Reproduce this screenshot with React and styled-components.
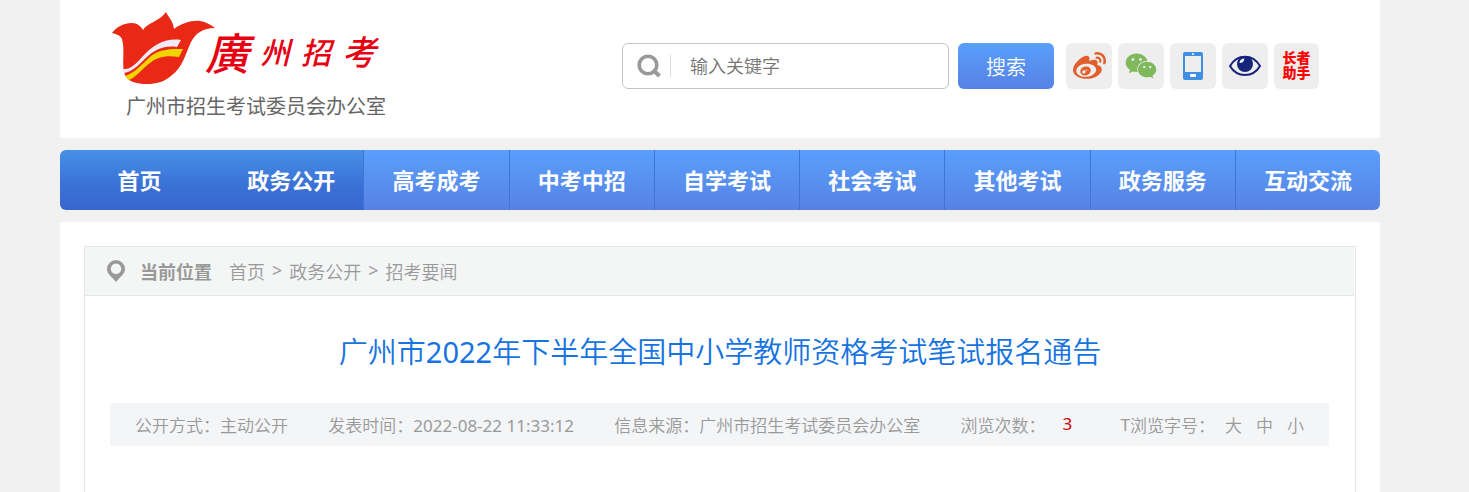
import { FaWeibo, FaWeixin } from 'react-icons/fa';
import styled, { createGlobalStyle } from 'styled-components';

const navItems = [
  '首页',
  '政务公开',
  '高考成考',
  '中考中招',
  '自学考试',
  '社会考试',
  '其他考试',
  '政务服务',
  '互动交流',
];

function Logo() {
  return (
    <LogoLink href="#">
      <LogoTop>
        <Flower viewBox="0 0 103 72" aria-hidden="true">
          <path
            fill="#e92815"
            d="M0 21C6 13 17 9 25 12C28 14 30 16 31 18C35 11 48 9 54 0C56 5 61 8 62 17C70 11 80 8 88 9C94 10 99 13 103 16C91 16 84 21 79 30C73 43 71 55 59 64C52 70 44 72 35 72C25 72 14 70 12 60C10 49 13 38 10 27C8 23 4 22 0 21Z"
          />
          <path
            fill="#f1e9f5"
            d="M11 57C20 58 26 49 33 42C43 32 54 26 69 28L65 35C52 33 43 38 36 44C27 52 21 60 12 61Z"
          />
          <path
            fill="#f1d400"
            d="M13 64C23 61 31 51 39 44C48 37 58 37 71 37L67 45C54 43 45 45 38 51C30 57 24 65 17 68Z"
          />
        </Flower>
        <Brush>
          <BrushChar $size={44}>廣</BrushChar>
          <BrushChar $size={30}>州</BrushChar>
          <BrushChar $size={30}>招</BrushChar>
          <BrushChar $size={34}>考</BrushChar>
        </Brush>
      </LogoTop>
      <Office>广州市招生考试委员会办公室</Office>
    </LogoLink>
  );
}

function Tools() {
  return (
    <ToolsForm role="search" onSubmit={(e) => e.preventDefault()}>
      <SearchBox>
        <svg width="24" height="24" viewBox="0 0 24 24" fill="none" stroke="#999">
          <circle cx="11" cy="11" r="8.8" strokeWidth="3.6" />
          <path d="M16 16L22.5 22" strokeWidth="4" />
        </svg>
        <SearchInput placeholder="输入关键字" aria-label="输入关键字" />
      </SearchBox>
      <SearchButton type="submit">搜索</SearchButton>
      <Shortcuts>
        <Shortcut href="#" aria-label="微博">
          <FaWeibo size={33} color="#e15f2d" />
        </Shortcut>
        <Shortcut href="#" aria-label="微信">
          <FaWeixin size={32} color="#7fb95b" />
        </Shortcut>
        <Shortcut href="#" aria-label="手机版">
          <svg width="20" height="28" viewBox="0 0 20 28">
            <rect width="20" height="28" rx="2" fill="#3f8fe2" />
            <rect x="2" y="4" width="16" height="16" fill="#eee" />
            <rect x="7" y="22" width="6" height="3" rx="1" fill="#fff" />
            <circle cx="10" cy="2" r="1" fill="#fff" />
          </svg>
        </Shortcut>
        <Shortcut href="#" aria-label="无障碍">
          <svg width="32" height="22" viewBox="0 0 32 22">
            <path
              d="M1 11C8 -1.5 24 -1.5 31 11C24 23 8 23 1 11Z"
              fill="#eee"
              stroke="#16247c"
              strokeWidth="2"
            />
            <circle cx="16" cy="9" r="8" fill="#16247c" />
            <path d="M10.5 8C10.5 5 12.5 3.5 15.5 3.5C15 6.5 13.5 8 10.5 8Z" fill="#eee" />
          </svg>
        </Shortcut>
        <Shortcut href="#">
          <Elder>长者助手</Elder>
        </Shortcut>
      </Shortcuts>
    </ToolsForm>
  );
}

function App() {
  return (
    <Page lang="zh-CN">
      <GlobalStyle />
      <Header>
        <Logo />
        <Tools />
      </Header>

      <Nav>
        {navItems.map((item, i) => (
          <NavLink key={item} href="#" $first={i === 0} $active={i < 2}>
            {item}
          </NavLink>
        ))}
      </Nav>

      <Main>
        <Panel>
          <Location>
            <svg width="18" height="22" viewBox="0 0 18 22">
              <path
                fill="#999"
                fillRule="evenodd"
                d="M9 0A9 9 0 0 1 18 9C18 14 13 17 9 22C5 17 0 14 0 9A9 9 0 0 1 9 0ZM9 3.5A5.2 5.2 0 1 0 9 14A5.2 5.2 0 1 0 9 3.5Z"
              />
            </svg>
            <strong>当前位置</strong>
            <Crumbs>
              <a href="#">首页</a>
              <Latin>&gt;</Latin>
              <a href="#">政务公开</a>
              <Latin>&gt;</Latin>
              <a href="#">招考要闻</a>
            </Crumbs>
          </Location>

          <Title>
            广州市<Latin>2022</Latin>年下半年全国中小学教师资格考试笔试报名通告
          </Title>

          <Meta>
            <span>公开方式：主动公开</span>
            <span>
              发表时间：<Latin>2022-08-22 11:33:12</Latin>
            </span>
            <span>信息来源：广州市招生考试委员会办公室</span>
            <Views>
              浏览次数：<Count>3</Count>
            </Views>
            <Sizes>
              <Latin>T</Latin>浏览字号：
              <SizeButton type="button">大</SizeButton>
              <SizeButton type="button">中</SizeButton>
              <SizeButton type="button">小</SizeButton>
            </Sizes>
          </Meta>
        </Panel>
      </Main>
    </Page>
  );
}

export default App;

const GlobalStyle = createGlobalStyle`
  * {
    box-sizing: border-box;
  }

  body {
    margin: 0;
    background-color: #f1f1f1;
    font-family: "Noto Sans", "Noto Sans CJK SC", sans-serif;
    font-weight: 350;
  }

  a {
    color: inherit;
    text-decoration: none;
  }

  button, input {
    font-family: inherit;
    font-weight: inherit;
  }
`;

const Page = styled.div`
  display: flex;
  flex-direction: column;
  gap: 12px;
  min-height: 100vh;
  padding: 0 89px 0 60px;
`;

const Latin = styled.span`
  font-weight: 400;
`;

const Header = styled.header`
  display: flex;
  justify-content: space-between;
  align-items: flex-start;
  height: 138px;
  padding: 0 61px 0 52px;
  background-color: #fff;
`;

const LogoLink = styled.a`
  display: flex;
  flex-direction: column;
  padding-top: 12px;
`;

const LogoTop = styled.div`
  display: flex;
  align-items: flex-start;
`;

const Flower = styled.svg`
  width: 103px;
  height: 72px;
`;

const Brush = styled.div`
  display: flex;
  align-items: center;
  gap: 11px;
  height: 72px;
  margin-left: -10px;
  padding-top: 6px;
`;

const BrushChar = styled.span`
  font-family: "Noto Sans CJK TC", sans-serif;
  font-size: ${({ $size }) => $size}px;
  font-style: italic;
  font-weight: 500;
  line-height: 48px;
  color: #e60012;
`;

const Office = styled.span`
  padding-left: 14px;
  font-size: 20px;
  font-weight: 400;
  line-height: 46px;
  color: #666;
`;

const ToolsForm = styled.form`
  display: flex;
  padding-top: 43px;
`;

const SearchBox = styled.div`
  display: flex;
  align-items: center;
  width: 327px;
  height: 46px;
  padding: 0 14px;
  border: 1px solid #c4c4c4;
  border-radius: 6px;
`;

const SearchInput = styled.input`
  flex: 1;
  min-width: 0;
  height: 22px;
  margin-left: 9px;
  padding: 0 0 0 19px;
  border: none;
  border-left: 1px solid #ddd;
  outline: none;
  font-size: 18px;
  background: none;

  &::placeholder {
    color: #757575;
  }
`;

const SearchButton = styled.button`
  width: 96px;
  height: 46px;
  margin: 0 12px 0 9px;
  border: none;
  border-radius: 6px;
  font-size: 20px;
  color: #fff;
  background: linear-gradient(#599ffb, #5782e4);
  cursor: pointer;
`;

const Shortcuts = styled.div`
  display: flex;
  gap: 6px;
`;

const Shortcut = styled.a`
  display: flex;
  align-items: center;
  justify-content: center;
  width: 46px;
  height: 46px;
  border-radius: 6px;
  background-color: #eee;

  &:last-child {
    width: 45px;
  }
`;

const Elder = styled.span`
  width: 28px;
  padding-bottom: 3px;
  font-size: 14px;
  font-weight: 900;
  line-height: 15px;
  color: #f00;
`;

const Nav = styled.nav`
  display: flex;
  height: 60px;
  border-radius: 6px;
  overflow: hidden;
`;

const NavLink = styled.a`
  flex: ${({ $first }) => ($first ? 158 : 145)} 1 0;
  border-left: 1px solid ${({ $active }) => ($active ? 'transparent' : '#3f74d6')};
  font-size: 22px;
  font-weight: 700;
  line-height: 60px;
  text-align: center;
  color: #fff;
  background: ${({ $active }) =>
    $active
      ? 'linear-gradient(#4690e8, #3b71d5 60%, #3866d0)'
      : 'linear-gradient(#599ffb, #5782e4)'};
`;

const Main = styled.main`
  display: flex;
  flex: 1;
  padding: 24px 24px 0;
  background-color: #fff;
`;

const Panel = styled.article`
  flex: 1;
  border: 1px solid #e4e6e6;
  border-bottom: none;
`;

const Location = styled.div`
  display: flex;
  align-items: center;
  height: 49px;
  margin-right: 1px;
  padding-left: 22px;
  border-bottom: 1px solid #e4e6e6;
  font-size: 18px;
  color: #999;
  background-color: #f4f6f6;

  strong {
    margin: 0 17px 0 15px;
    font-weight: 700;
  }
`;

const Crumbs = styled.nav`
  display: flex;
  gap: 7px;
`;

const Title = styled.h1`
  margin: 0;
  padding: 36px 0 31px;
  font-size: 29px;
  font-weight: 350;
  line-height: 40px;
  text-align: center;
  color: #1673e0;
`;

const Meta = styled.div`
  display: flex;
  justify-content: space-between;
  align-items: center;
  height: 43px;
  margin: 0 26px 0 25px;
  padding: 0 25px;
  font-size: 17px;
  color: #999;
  white-space: nowrap;
  background-color: #f3f5f7;
`;

const Views = styled.span`
  display: flex;
`;

const Count = styled.span`
  padding: 0 8px 0 17px;
  font-weight: 400;
  color: #c00;
`;

const Sizes = styled.div`
  display: flex;
  align-items: center;
`;

const SizeButton = styled.button`
  margin-left: 14px;
  padding: 0;
  border: none;
  font-size: 17px;
  color: inherit;
  background: none;
  cursor: pointer;

  &:first-of-type {
    margin-left: 10px;
  }
`;
